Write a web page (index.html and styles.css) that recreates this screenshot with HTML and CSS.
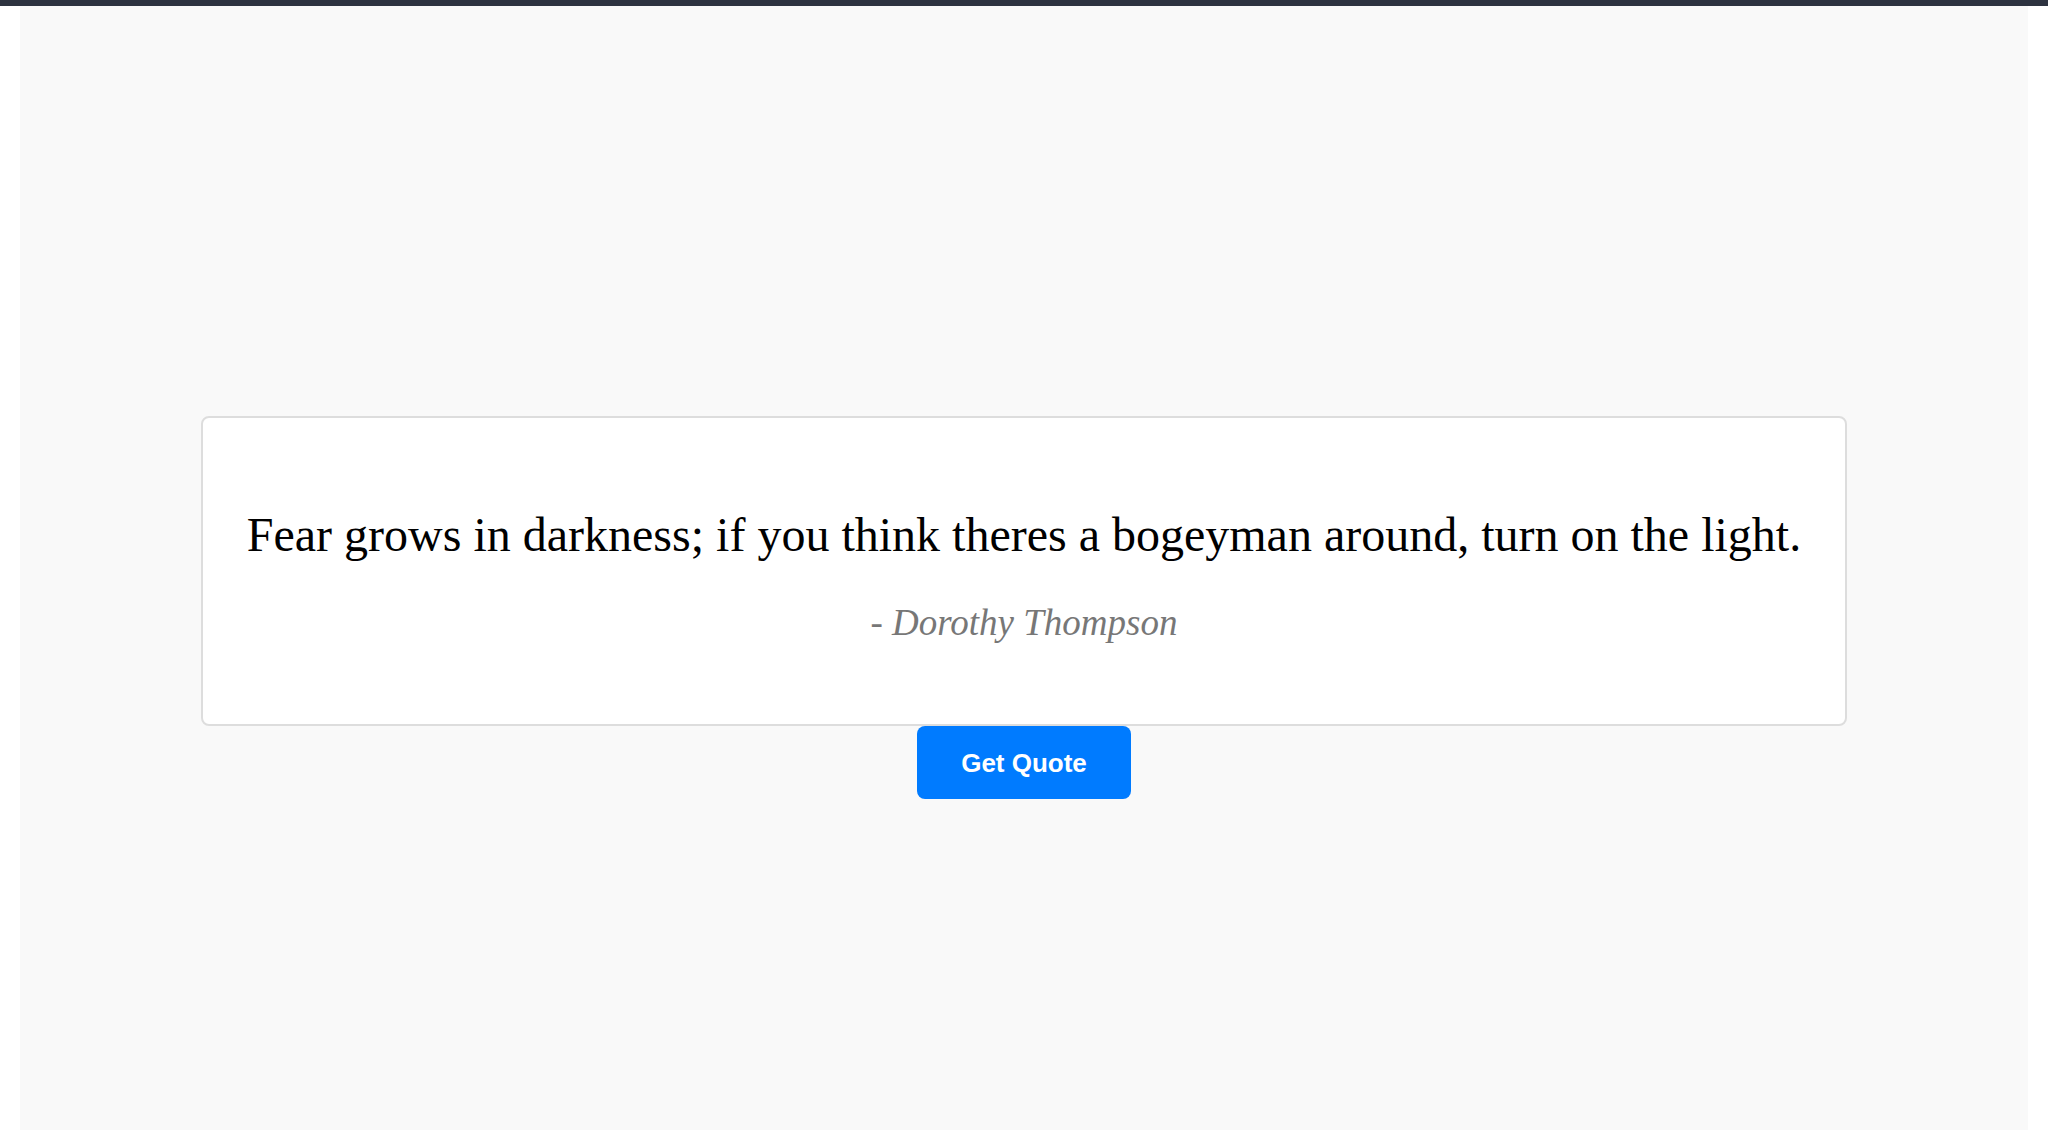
FILE: index.html
```html
<html>
<head>
  <meta charset="UTF-8">
  <title>Quote Generator</title>
  <link rel="stylesheet" href="styles.css">
</head>
<body>
  <div class="topbar"></div>
  <div class="main">
    <div class="quote-box">
      <p class="quote" id="quote">Fear grows in darkness; if you think theres a bogeyman around, turn on the light.</p>
      <p class="author" id="author">- Dorothy Thompson</p>
    </div>
    <button class="get-quote">Get Quote</button>
  </div>
</body>
</html>
```

FILE: styles.css
```css
body{
  margin: 0;
  background: #fff;
  font-family: "Liberation Serif", "Times New Roman", serif;
}
.topbar{
  height: 6px;
  background: #2d3340;
}
.main{
  background: #f9f9f9;
  width: 98%;
  margin: 0 auto;
  min-height: calc(100vh - 6px);
  padding-top: 410px;
  box-sizing: border-box;
  display: flex;
  flex-direction: column;
  align-items: center;
}
.quote-box{
  width: 82%;
  box-sizing: border-box;
  background: #fff;
  border: 2px solid #dddddd;
  border-radius: 8px;
  padding: 44px 32px;
  text-align: center;
}
.quote{
  font-size: 48px;
  color: #000;
  margin: 45px 0 39px;
}
.author{
  font-size: 37px;
  font-style: italic;
  color: #777;
  margin: 0 0 36px;
}
.get-quote{
  font-family: "Liberation Sans", Arial, Helvetica, sans-serif;
  font-size: 26px;
  font-weight: bold;
  line-height: 30px;
  color: #fff;
  background: #007bff;
  border: none;
  border-radius: 8px;
  padding: 22px 44px 21px;
  cursor: pointer;
}
```
